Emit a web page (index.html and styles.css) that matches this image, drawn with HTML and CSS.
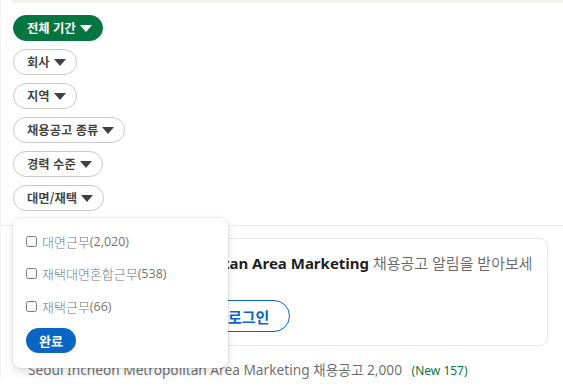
FILE: index.html
```html
<!DOCTYPE html>
<html lang="ko">
<head>
    <meta charset="UTF-8">
    <meta name="viewport" content="width=device-width, initial-scale=1.0">
    <title>채용공고 검색</title>
    <link rel="stylesheet" href="styles.css">
</head>
<body>
    <div class="top-strip"></div>

    <!-- 필터 -->
    <section class="filters">
        <button class="pill pill-active">전체 기간 <span class="caret"></span></button>
        <button class="pill">회사 <span class="caret"></span></button>
        <button class="pill">지역 <span class="caret"></span></button>
        <button class="pill">채용공고 종류 <span class="caret"></span></button>
        <button class="pill">경력 수준 <span class="caret"></span></button>
        <button class="pill">대면/재택 <span class="caret"></span></button>
    </section>

    <!-- 대면/재택 드롭다운 -->
    <div class="dropdown">
        <label class="option"><input type="checkbox"> 대면근무<span class="count">(2,020)</span></label>
        <label class="option"><input type="checkbox"> 재택대면혼합근무<span class="count">(538)</span></label>
        <label class="option"><input type="checkbox"> 재택근무<span class="count">(66)</span></label>
        <button class="btn-done">완료</button>
    </div>

    <main class="results">
        <div class="alert-card">
            <p class="alert-text"><strong>Seoul Incheon Metropolitan Area Marketing</strong> 채용공고 알림을 받아보세요</p>
            <div class="alert-actions">
                <button class="btn-join">가입하기</button>
                <button class="btn-login">로그인</button>
            </div>
        </div>
        <p class="result-count">Seoul Incheon Metropolitan Area Marketing 채용공고 2,000 <span class="new">(New 157)</span></p>
    </main>
</body>
</html>
```

FILE: styles.css
```css
* {
    box-sizing: border-box;
}
body {
    margin: 0;
    background: #fff;
    font-family: "Noto Sans", "Noto Sans CJK KR", sans-serif;
    color: rgba(0, 0, 0, 0.9);
    border-left: 1px solid #f3f3f3;
}
.top-strip {
    height: 3px;
    margin-left: 11px;
    background: #f3f2ef;
}
.filters {
    display: flex;
    flex-direction: column;
    align-items: flex-start;
    gap: 8px;
    padding: 12px 0 14px 12px;
    border-bottom: 1px solid #ebebeb;
}
.pill {
    display: flex;
    align-items: center;
    gap: 4px;
    height: 26px;
    padding: 0 10px 0 13px;
    border: 1px solid #c8c8c8;
    border-radius: 13px;
    background: #fff;
    color: rgba(0, 0, 0, 0.75);
    font-family: "Noto Sans CJK KR", sans-serif;
    font-size: 12.3px;
    font-weight: 700;
}
.pill-active {
    background: #057642;
    border-color: #057642;
    color: #fff;
}
.caret {
    width: 0;
    height: 0;
    border-left: 6px solid transparent;
    border-right: 6px solid transparent;
    border-top: 7px solid currentColor;
    margin-top: 1px;
}
.dropdown {
    position: absolute;
    top: 218px;
    left: 13px;
    width: 215px;
    height: 150px;
    padding: 12px 13px 0;
    background: #fff;
    border-radius: 8px;
    box-shadow: 0 0 0 1px rgba(0, 0, 0, 0.06), 0 4px 10px rgba(0, 0, 0, 0.12);
    z-index: 2;
}
.option {
    display: flex;
    align-items: center;
    height: 22px;
    margin-bottom: 10.5px;
    color: rgba(0, 0, 0, 0.6);
    font-family: "Noto Sans CJK KR", sans-serif;
    font-size: 13px;
    font-weight: 300;
}
.option input {
    width: 11px;
    height: 11px;
    margin: 0 5px 0 0;
}
.count {
    font-family: "Open Sans", sans-serif;
    font-size: 12.5px;
    font-weight: 400;
}
.btn-done {
    height: 25px;
    padding: 0 13px;
    border: none;
    border-radius: 13px;
    background: #0a66c2;
    color: #fff;
    font-family: "Noto Sans CJK KR", sans-serif;
    font-size: 13px;
    font-weight: 700;
}
.results {
    padding: 12px 15px 0 13px;
}
.alert-card {
    height: 108px;
    padding: 14px 16px 14px 25px;
    border: 1px solid #e6e6e6;
    border-radius: 8px;
}
.alert-text {
    margin: 0;
    width: 500px;
    font-size: 15px;
    line-height: 21px;
    color: rgba(0, 0, 0, 0.6);
    font-family: "Noto Sans", "Noto Sans CJK KR", sans-serif;
}
.alert-text strong {
    color: rgba(0, 0, 0, 0.9);
}
.alert-actions {
    display: flex;
    gap: 12px;
    margin-top: 5px;
}
.btn-join,
.btn-login {
    height: 32px;
    padding: 0 20px;
    border-radius: 16px;
    font-family: "Noto Sans CJK KR", sans-serif;
    font-size: 15px;
    font-weight: 700;
}
.btn-join {
    width: 155px;
    border: none;
    background: #0a66c2;
    color: #fff;
}
.btn-login {
    border: 1px solid #0a66c2;
    background: #fff;
    color: #0a66c2;
}
.result-count {
    margin: 13px 0 0 14px;
    font-size: 13.7px;
    color: rgba(0, 0, 0, 0.6);
    font-family: "Noto Sans", "Noto Sans CJK KR", sans-serif;
}
.new {
    margin-left: 6px;
    font-size: 12px;
    color: #057642;
}
```
